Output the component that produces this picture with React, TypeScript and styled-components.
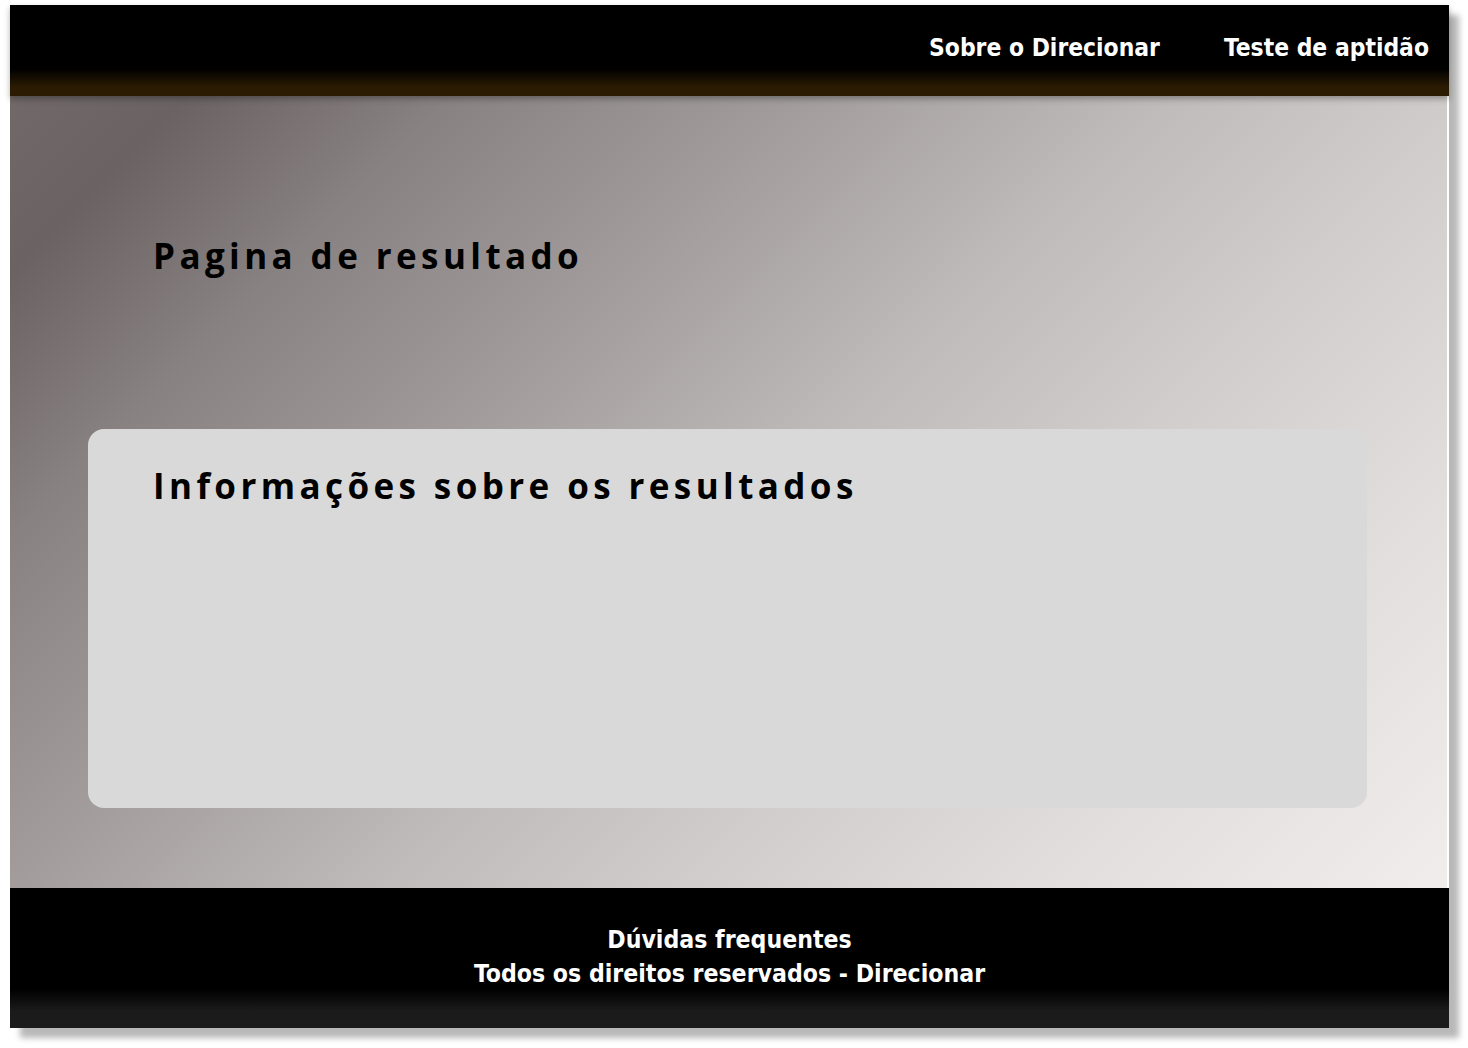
import React from "react";
import styled, { createGlobalStyle } from "styled-components";

const Global = createGlobalStyle`
  html, body { margin: 0; padding: 0; background: #ffffff; }
  body { font-family: "DejaVu Sans", sans-serif; }
  * { box-sizing: border-box; }
`;

const Page = styled.div`
  padding: 5px 0 0 10px;
  width: 1468px;
  height: 1048px;
`;

const Frame = styled.div`
  width: 1439px;
  display: flex;
  flex-direction: column;
  box-shadow: 10px 10px 6px rgba(0, 0, 0, 0.28);
`;

const Header = styled.header`
  position: relative;
  z-index: 1;
  height: 91px;
  background: linear-gradient(to bottom, #000 0%, #000 70%, #2a1b02 90%, #2a1b02 100%);
  box-shadow: 0 3px 6px rgba(0, 0, 0, 0.3);
  display: flex;
  justify-content: flex-end;
  align-items: center;
  padding: 0 20px 6px 0;
  gap: 64px;
`;

const NavLink = styled.a`
  font-family: "DejaVu Sans Condensed", "DejaVu Sans", sans-serif;
  font-weight: bold;
  font-size: 24.4px;
  color: #ffffff;
  text-decoration: none;
`;

const Main = styled.main`
  height: 792px;
  background: linear-gradient(
    135deg,
    #716969 0%,
    #6b6363 8%,
    #898282 20%,
    #a19b9b 35%,
    #c0bbbb 52%,
    #d1cdcd 66%,
    #e2dede 82%,
    #f0edec 100%
  );
  border-right: 2px solid #ffffff;
  padding: 139px 80px 0 78px;
  display: flex;
  flex-direction: column;
`;

const Title = styled.h1`
  margin: 0 0 0 65px;
  font-family: "Open Sans", sans-serif;
  font-weight: 700;
  font-size: 35px;
  letter-spacing: 4.4px;
  color: #000;
  line-height: 1.2;
`;

const Card = styled.section`
  margin-top: 152px;
  height: 379px;
  background: #d9d9d9;
  border-radius: 16px;
  padding: 36px 65px;
`;

const CardTitle = styled.h2`
  margin: 0;
  font-family: "Open Sans", sans-serif;
  font-weight: 700;
  font-size: 35px;
  letter-spacing: 4.4px;
  color: #000;
  line-height: 1.2;
`;

const Footer = styled.footer`
  height: 140px;
  background: linear-gradient(to bottom, #000 0%, #000 72%, #1b1b1b 88%, #1b1b1b 100%);
  display: flex;
  flex-direction: column;
  align-items: center;
  padding-top: 35px;
`;

const FooterLine = styled.p`
  margin: 0;
  font-family: "DejaVu Sans Condensed", "DejaVu Sans", sans-serif;
  font-weight: bold;
  font-size: 24.6px;
  line-height: 34px;
  color: #ffffff;
`;

export default function App() {
  return (
    <>
      <Global />
      <Page>
        <Frame>
          <Header>
            <NavLink href="#">Sobre o Direcionar</NavLink>
            <NavLink href="#">Teste de aptidão</NavLink>
          </Header>
          <Main>
            <Title>Pagina de resultado</Title>
            <Card>
              <CardTitle>Informações sobre os resultados</CardTitle>
            </Card>
          </Main>
          <Footer>
            <FooterLine>Dúvidas frequentes</FooterLine>
            <FooterLine>Todos os direitos reservados - Direcionar</FooterLine>
          </Footer>
        </Frame>
      </Page>
    </>
  );
}
